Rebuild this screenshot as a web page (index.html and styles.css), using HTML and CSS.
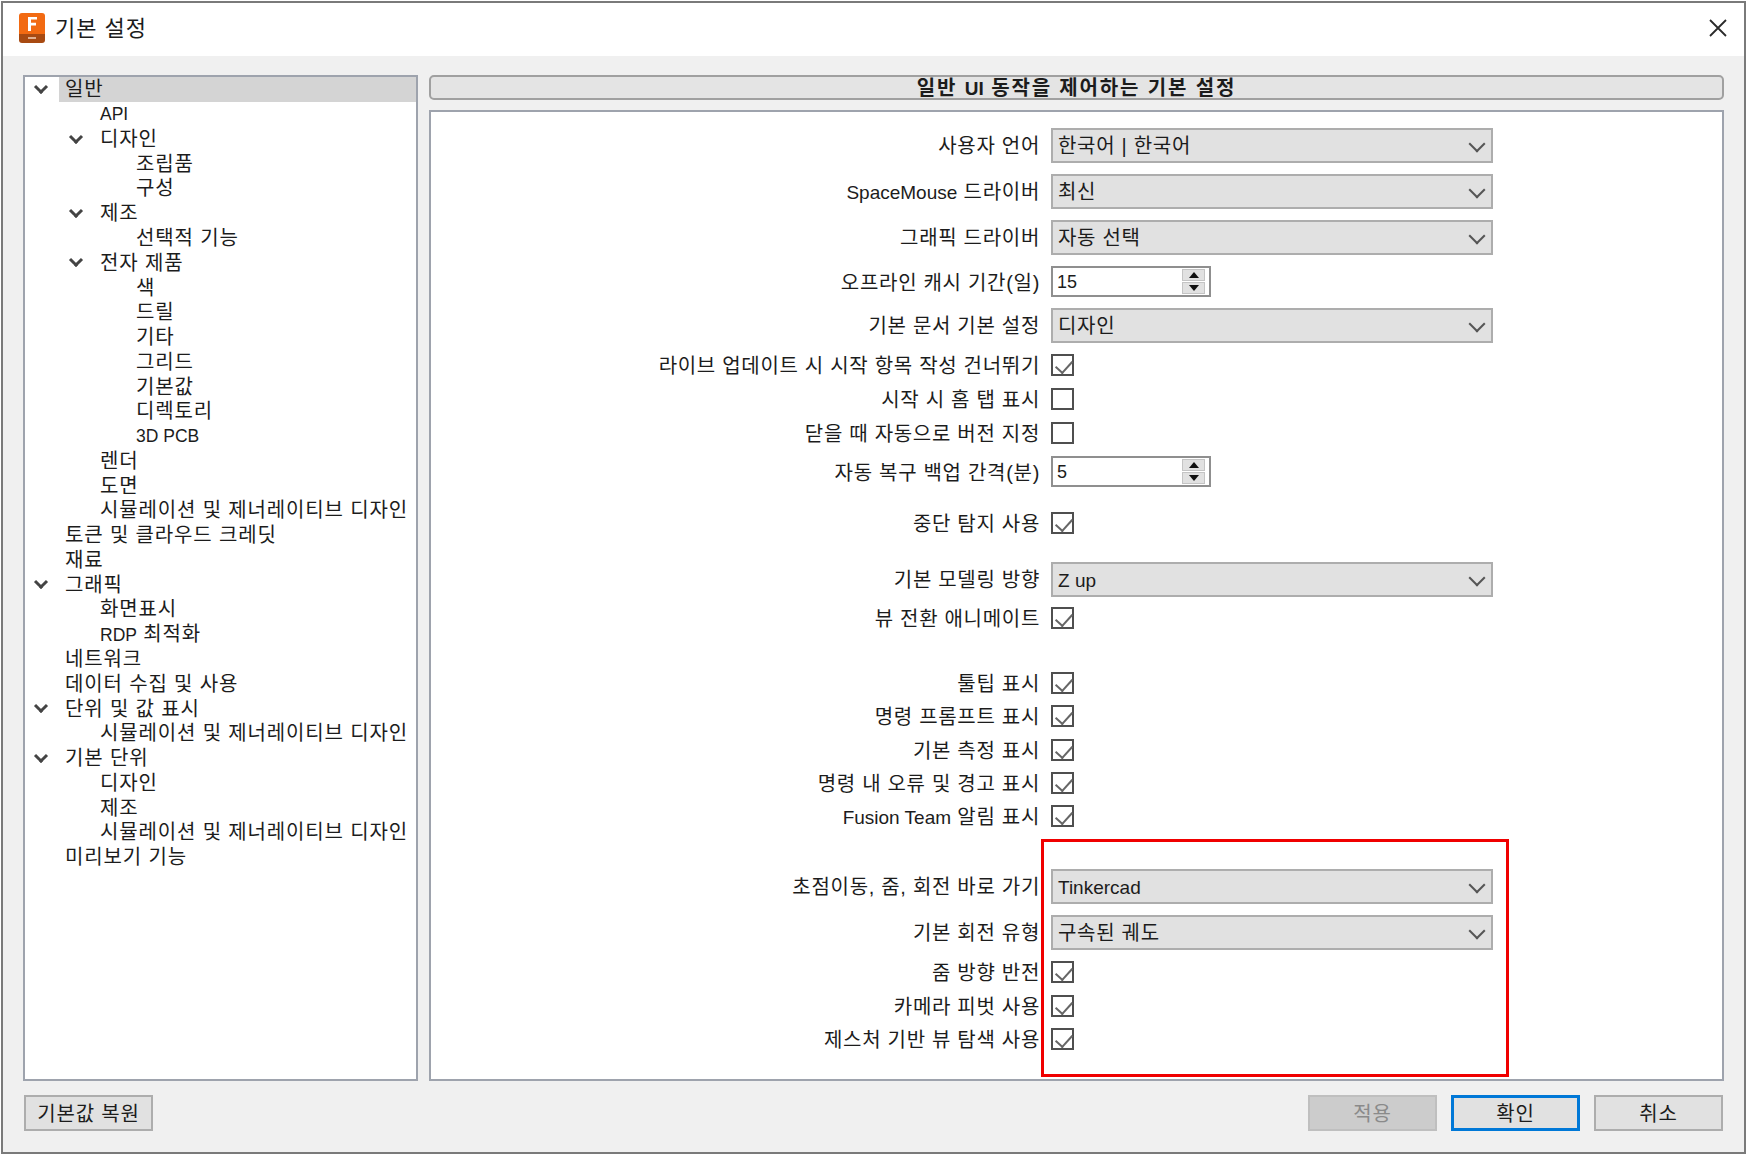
FILE: index.html
```html
<!DOCTYPE html>
<html lang="ko">
<head>
<meta charset="utf-8">
<title>기본 설정</title>
<link rel="stylesheet" href="styles.css">
</head>
<body>
<div class="dialog">
  <header class="titlebar">
    <svg class="logo" viewBox="0 0 26 30" width="26" height="30">
      <path d="M3 0h20a3 3 0 0 1 3 3v21H0V3a3 3 0 0 1 3-3z" fill="#f26a12"/>
      <path d="M0 21h26v6a3 3 0 0 1-3 3H3a3 3 0 0 1-3-3z" fill="#a84a12"/>
      <path d="M9 4h9v2.600h-6v3.200h5v2.600h-5V18H9z" fill="#fff"/>
      <path d="M9 24h8v2H9z" fill="#e0b090"/>
    </svg>
    <span class="title">기본 설정</span>
    <svg class="close" viewBox="0 0 18 18" width="18" height="18"><path d="M1 1l16 16M17 1L1 17" stroke="#2a2a2a" stroke-width="1.800" fill="none"/></svg>
  </header>
  <div class="content">
    <div class="panes">
      <nav class="tree">
        <div class="node selected l0"><i class="chev"></i><span class="label">일반</span></div>
        <div class="node l1"><span class="label lat">API</span></div>
        <div class="node l1"><i class="chev"></i><span class="label">디자인</span></div>
        <div class="node l2"><span class="label">조립품</span></div>
        <div class="node l2"><span class="label">구성</span></div>
        <div class="node l1"><i class="chev"></i><span class="label">제조</span></div>
        <div class="node l2"><span class="label">선택적 기능</span></div>
        <div class="node l1"><i class="chev"></i><span class="label">전자 제품</span></div>
        <div class="node l2"><span class="label">색</span></div>
        <div class="node l2"><span class="label">드릴</span></div>
        <div class="node l2"><span class="label">기타</span></div>
        <div class="node l2"><span class="label">그리드</span></div>
        <div class="node l2"><span class="label">기본값</span></div>
        <div class="node l2"><span class="label">디렉토리</span></div>
        <div class="node l2"><span class="label lat">3D PCB</span></div>
        <div class="node l1"><span class="label">렌더</span></div>
        <div class="node l1"><span class="label">도면</span></div>
        <div class="node l1"><span class="label">시뮬레이션 및 제너레이티브 디자인</span></div>
        <div class="node l0"><span class="label">토큰 및 클라우드 크레딧</span></div>
        <div class="node l0"><span class="label">재료</span></div>
        <div class="node l0"><i class="chev"></i><span class="label">그래픽</span></div>
        <div class="node l1"><span class="label">화면표시</span></div>
        <div class="node l1"><span class="label"><span class="lat">RDP</span> 최적화</span></div>
        <div class="node l0"><span class="label">네트워크</span></div>
        <div class="node l0"><span class="label">데이터 수집 및 사용</span></div>
        <div class="node l0"><i class="chev"></i><span class="label">단위 및 값 표시</span></div>
        <div class="node l1"><span class="label">시뮬레이션 및 제너레이티브 디자인</span></div>
        <div class="node l0"><i class="chev"></i><span class="label">기본 단위</span></div>
        <div class="node l1"><span class="label">디자인</span></div>
        <div class="node l1"><span class="label">제조</span></div>
        <div class="node l1"><span class="label">시뮬레이션 및 제너레이티브 디자인</span></div>
        <div class="node l0"><span class="label">미리보기 기능</span></div>
      </nav>
      <main class="main">
        <div class="section-head">일반 <span class="lat">UI</span> 동작을 제어하는 기본 설정</div>
        <div class="form">
          <div class="row combo-row m16"><label>사용자 언어</label><div class="combo">한국어 | 한국어</div></div>
          <div class="row combo-row m11"><label><span class="lat">SpaceMouse</span> 드라이버</label><div class="combo">최신</div></div>
          <div class="row combo-row m11"><label>그래픽 드라이버</label><div class="combo">자동 선택</div></div>
          <div class="row spin-row m11"><label>오프라인 캐시 기간(일)</label><div class="spin"><span>15</span><div class="spin-btns"><b class="up"></b><b class="down"></b></div></div></div>
          <div class="row combo-row m11"><label>기본 문서 기본 설정</label><div class="combo">디자인</div></div>
          <div class="row check-row m11"><label>라이브 업데이트 시 시작 항목 작성 건너뛰기</label><div class="check on"></div></div>
          <div class="row check-row m12"><label>시작 시 홈 탭 표시</label><div class="check"></div></div>
          <div class="row check-row m12"><label>닫을 때 자동으로 버전 지정</label><div class="check"></div></div>
          <div class="row spin-row m12"><label>자동 복구 백업 간격(분)</label><div class="spin"><span>5</span><div class="spin-btns"><b class="up"></b><b class="down"></b></div></div></div>
          <div class="row check-row m25"><label>중단 탐지 사용</label><div class="check on"></div></div>
          <div class="row combo-row m28"><label>기본 모델링 방향</label><div class="combo"><span class="lat">Z up</span></div></div>
          <div class="row check-row m10"><label>뷰 전환 애니메이트</label><div class="check on"></div></div>
          <div class="row check-row m43"><label>툴팁 표시</label><div class="check on"></div></div>
          <div class="row check-row m11"><label>명령 프롬프트 표시</label><div class="check on"></div></div>
          <div class="row check-row m12"><label>기본 측정 표시</label><div class="check on"></div></div>
          <div class="row check-row m11"><label>명령 내 오류 및 경고 표시</label><div class="check on"></div></div>
          <div class="row check-row m11"><label><span class="lat">Fusion Team</span> 알림 표시</label><div class="check on"></div></div>
          <div class="row combo-row m42"><label>초점이동, 줌, 회전 바로 가기</label><div class="combo"><span class="lat">Tinkercad</span></div></div>
          <div class="row combo-row m11"><label>기본 회전 유형</label><div class="combo">구속된 궤도</div></div>
          <div class="row check-row m11"><label>줌 방향 반전</label><div class="check on"></div></div>
          <div class="row check-row m12"><label>카메라 피벗 사용</label><div class="check on"></div></div>
          <div class="row check-row m11"><label>제스처 기반 뷰 탐색 사용</label><div class="check on"></div></div>
          <div class="highlight"></div>
        </div>
      </main>
    </div>
    <footer class="footer">
      <button class="btn restore">기본값 복원</button>
      <div class="actions">
        <button class="btn disabled">적용</button>
        <button class="btn primary">확인</button>
        <button class="btn">취소</button>
      </div>
    </footer>
  </div>
</div>
</body>
</html>
```
FILE: styles.css
```css
* { box-sizing: border-box; }
html, body { margin: 0; padding: 0; background: #fff; }
body {
  width: 1751px;
  height: 1159px;
  overflow: hidden;
  padding: 1px 1px 0 1px;
  font-family: "Liberation Sans", "Noto Sans CJK KR", sans-serif;
  font-size: 20px;
  letter-spacing: 0.85px;
  color: #1c1c1c;
}
.lat { font-size: 19px; letter-spacing: 0; }
.tree .lat { font-size: 17.5px; }
.dialog {
  width: 1745px;
  height: 1153px;
  border: 2px solid #7a7a7a;
  display: flex;
  flex-direction: column;
  background: #f0f0f0;
}
.titlebar {
  height: 53px;
  flex: none;
  background: #fff;
  display: flex;
  align-items: center;
  padding: 0 15px 0 16px;
}
.logo { flex: none; margin-top: -4px; }
.title { margin-left: 10px; font-size: 22px; margin-top: -7px; letter-spacing: 1px; }
.close { margin-left: auto; margin-top: -4px; margin-right: 2px; }
.content {
  flex: 1;
  display: flex;
  flex-direction: column;
  padding: 19px 20px 0 20px;
}
.panes { display: flex; gap: 11px; height: 1006px; flex: none; }
.tree {
  width: 395px;
  flex: none;
  background: #fff;
  border: 2px solid #9ea3ad;
  padding: 0;
}
.node {
  height: 24.77px;
  display: flex;
  align-items: center;
  position: relative;
  line-height: 24px;
  white-space: nowrap;
}
.l0 { padding-left: 40px; }
.l1 { padding-left: 75px; }
.l2 { padding-left: 111px; }
.selected { background: #d4d4d4; margin-left: 34px; padding-left: 6px; }
.chev {
  position: absolute;
  width: 10px;
  height: 10px;
  border-right: 3px solid #444;
  border-bottom: 3px solid #444;
  transform: rotate(45deg);
  top: 5px;
}
.l0 .chev { left: 11px; }
.l1 .chev { left: 46px; }
.selected .chev { left: -23px; }
.label { display: block; }
.main { flex: 1; display: flex; flex-direction: column; gap: 10px; min-width: 0; }
.section-head {
  height: 25px;
  flex: none;
  background: #e4e4e4;
  border: 2px solid #a0a0a0;
  border-radius: 5px;
  text-align: center;
  font-weight: 700;
  line-height: 22px;
  font-size: 20px;
  letter-spacing: 1.85px;
}
.form {
  position: relative;
  flex: 1;
  background: #fff;
  border: 2px solid #9ea3ad;
  padding: 0;
  letter-spacing: 0.7px;
}
.row { display: flex; align-items: center; }
.row label { width: 609px; flex: none; text-align: right; white-space: nowrap; margin-right: 11px; }
.check-row label { margin-top: -2px; }
.combo-row label { margin-top: -2px; }
.combo-row { height: 35px; }
.spin-row { height: 31px; }
.check-row { height: 22px; }
.m10 { margin-top: 10px; }
.m11 { margin-top: 11px; }
.m12 { margin-top: 12px; }
.m16 { margin-top: 16px; }
.m25 { margin-top: 25px; }
.m28 { margin-top: 28px; }
.m42 { margin-top: 42px; }
.m43 { margin-top: 43px; }
.combo {
  width: 442px;
  height: 35px;
  background: #e1e1e1;
  border: 2px solid #adadad;
  padding-left: 5px;
  line-height: 32px;
  position: relative;
}
.combo::after {
  content: "";
  position: absolute;
  right: 8px;
  top: 8px;
  width: 10px;
  height: 10px;
  border-right: 2px solid #555;
  border-bottom: 2px solid #555;
  transform: rotate(45deg);
}
.spin {
  width: 160px;
  height: 31px;
  background: #fff;
  border: 2px solid #8f8f8f;
  display: flex;
  align-items: center;
  justify-content: space-between;
  padding: 2px 3px 0 4px;
  font-size: 18px;
  letter-spacing: 0;
}
.spin-btns {
  width: 23px;
  height: 25px;
  display: flex;
  flex-direction: column;
  gap: 1px;
  margin-right: 1px;
  margin-top: -2px;
}
.spin-btns b {
  flex: 1;
  background: #e1e1e1;
  border: 1px solid #c4c4c4;
  display: flex;
  align-items: center;
  justify-content: center;
}
.up::before, .down::before {
  content: "";
  width: 0;
  height: 0;
  border-left: 5px solid transparent;
  border-right: 5px solid transparent;
}
.up::before { border-bottom: 6px solid #111; }
.down::before { border-top: 6px solid #111; }
.check {
  width: 23px;
  height: 22px;
  background: #fff;
  border: 2px solid #4f4f4f;
  position: relative;
}
.check.on::after {
  content: "";
  position: absolute;
  left: 6px;
  top: 1px;
  width: 8px;
  height: 14px;
  border-right: 2px solid #666;
  border-bottom: 2px solid #666;
  transform: rotate(42deg);
}
.highlight {
  position: absolute;
  left: 610px;
  top: 727px;
  width: 468px;
  height: 238px;
  border: 3px solid #f00000;
  pointer-events: none;
}
.footer {
  display: flex;
  justify-content: space-between;
  margin-top: 14px;
  padding: 0 1px;
}
.actions { display: flex; gap: 14px; }
.btn {
  width: 129px;
  height: 36px;
  background: #e1e1e1;
  border: 2px solid #adadad;
  font: inherit;
  letter-spacing: inherit;
  color: #1c1c1c;
  padding: 1px 0 0;
  line-height: 30px;
}
.btn.primary { border: 3px solid #0078d7; }
.btn.disabled { background: #cccccc; border-color: #bfbfbf; color: #8a8a8a; }
```
